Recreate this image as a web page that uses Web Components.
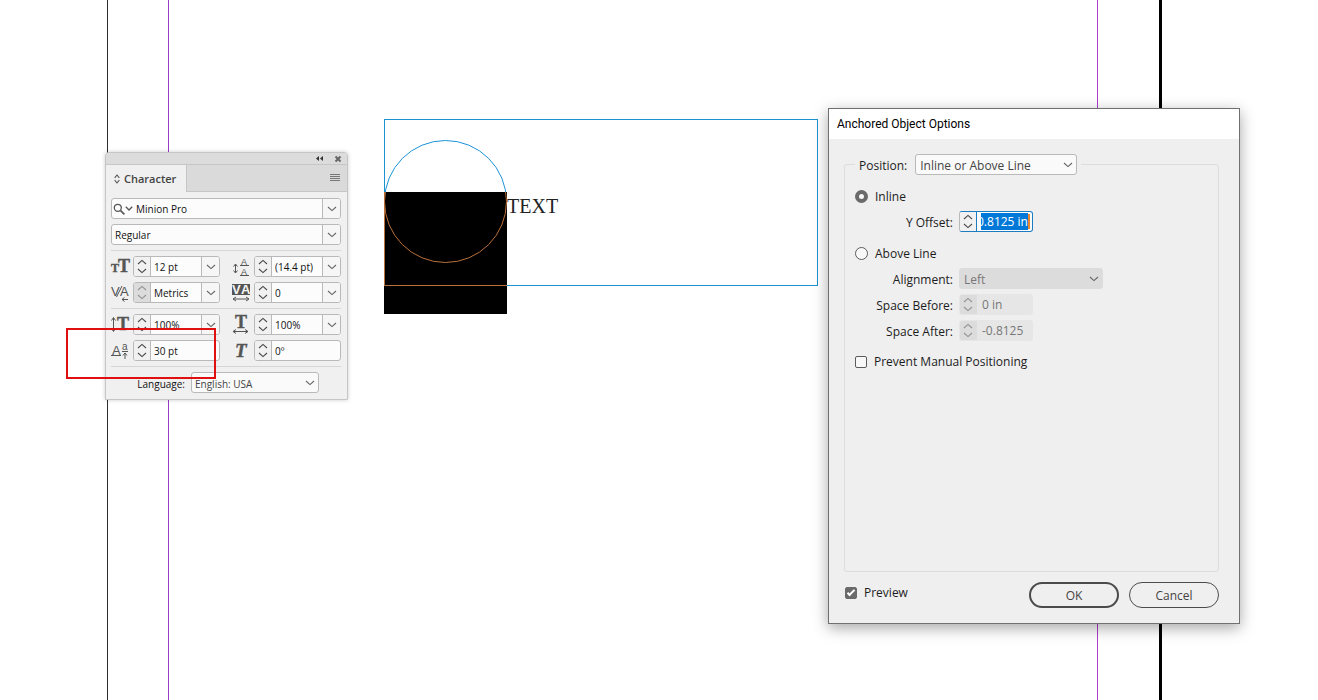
<!DOCTYPE html>
<html lang="en">
<head>
<meta charset="utf-8">
<title>Anchored Object Options</title>
<style>
  body {
    margin: 0;
    background: #fff;
    font-family: "Open Sans", "Noto Sans", sans-serif;
    font-size: 12px;
    color: #1c1c1c;
  }
</style>
</head>
<body>

<layout-canvas>
  <page-guide style="--x: 107px; --color: #2e2e2e"></page-guide>
  <page-guide style="--x: 168px; --color: #9a3cc8"></page-guide>
  <page-guide style="--x: 1097px; --color: #b03cd0"></page-guide>
  <page-guide style="--x: 1159px; --weight: 3px; --color: #000"></page-guide>
  <text-frame></text-frame>
  <character-panel></character-panel>
  <highlight-box></highlight-box>
  <anchor-dialog></anchor-dialog>
</layout-canvas>

<script>
const chevronDown = '<svg class="chevron" width="10" height="6" viewBox="0 0 10 6" aria-hidden="true"><path d="M1 1l4 3.6L9 1" fill="none" stroke="currentColor" stroke-width="1.1"/></svg>';
const chevronUp = '<svg class="chevron" width="10" height="6" viewBox="0 0 10 6" aria-hidden="true"><path d="M1 5l4-3.6L9 5" fill="none" stroke="currentColor" stroke-width="1.1"/></svg>';

/**
 * Base for all elements: attaches an open root and clones the template.
 */
class BaseElement extends HTMLElement {
  /** @param {string} html */
  render(html) {
    const template = document.createElement('template');
    template.innerHTML = `
      <style>
        *, ::before, ::after { box-sizing: border-box; }
        :host { display: block; box-sizing: border-box; }
        :host([hidden]) { display: none; }
        button, input, select { font: inherit; color: inherit; margin: 0; }
        svg { display: block; flex: none; }
      </style>
      ${html}
    `;
    this.attachShadow({mode: 'open'}).appendChild(template.content.cloneNode(true));
  }
}


/** The pasteboard. Guides, frames and windows are placed freely on it. */
class LayoutCanvas extends BaseElement {
  constructor() {
    super();
    this.render(`
      <style>
        :host { position: relative; min-height: 100vh; overflow: hidden; }
      </style>
      <slot></slot>
    `);
  }
}


class PageGuide extends BaseElement {
  constructor() {
    super();
    this.render(`
      <style>
        :host {
          position: absolute;
          top: 0;
          bottom: 0;
          left: var(--x);
          width: var(--weight, 1px);
          background: var(--color);
        }
      </style>
    `);
  }
}


/** Text frame with the anchored square and its circular path. */
class TextFrame extends BaseElement {
  constructor() {
    super();
    this.render(`
      <style>
        :host { position: absolute; left: 384px; top: 119px; }
        text { font: 20px "Liberation Serif", serif; fill: #222; }
      </style>
      <svg width="434" height="195" viewBox="0 0 434 195" fill="none">
        <defs>
          <clipPath id="above"><rect width="434" height="73"/></clipPath>
          <clipPath id="below"><rect y="73" width="123" height="122"/></clipPath>
        </defs>
        <rect y="73" width="123" height="122" fill="#000"/>
        <rect x=".5" y=".5" width="433" height="166" stroke="#1c93cf"/>
        <circle cx="61.5" cy="82.5" r="61" stroke="#1c93d8" clip-path="url(#above)"/>
        <g clip-path="url(#below)" stroke="#b9703a">
          <path d="M.5 73V166.5H123"/>
          <circle cx="61.5" cy="82.5" r="61"/>
        </g>
        <text x="123" y="94">TEXT</text>
      </svg>
    `);
  }
}


class HighlightBox extends BaseElement {
  constructor() {
    super();
    this.render(`
      <style>
        :host {
          position: absolute;
          left: 66px;
          top: 328px;
          width: 150px;
          height: 51px;
          border: 2px solid #e01010;
          pointer-events: none;
        }
      </style>
    `);
  }
}


/**
 * Text field with optional stepper and drop-down button.
 * Attributes: label, value, name, stepper, menu, disabled, selected,
 *    stepper-off, search.
 */
class ValueField extends BaseElement {
  constructor() {
    super();
    const has = (name) => this.hasAttribute(name);
    const text = this.getAttribute('label') || '';
    const off = has('disabled') ? 'disabled' : '';
    const stepOff = has('disabled') || has('stepper-off') ? 'disabled' : '';

    this.render(`
      <style>
        :host { display: flex; align-items: center; gap: 6px; min-width: 0; }
        label { width: var(--label-width); padding-top: 2px; text-align: right; white-space: nowrap; }
        .box {
          display: flex;
          flex: 1;
          min-width: 0;
          height: 21px;
          border: 1px solid #b9b9b9;
          border-radius: 3px;
          background: #fcfcfc;
          overflow: hidden;
        }
        input {
          flex: 1;
          width: 0;
          min-width: 0;
          padding: 0;
          margin: 0 var(--inset, 3px);
          border: 0;
          outline: 0;
          background: none;
        }
        button {
          display: grid;
          place-items: center;
          padding: 0;
          border: 0;
          background: none;
          color: #4a4a4a;
        }
        .stepper {
          display: grid;
          grid-template-rows: 1fr 1fr;
          flex: none;
          width: 17px;
          border-right: 1px solid #b9b9b9;
          background: #f1f1f1;
        }
        .stepper.off { background: #dcdcdc; }
        .stepper.off button { color: #929292; }
        .menu {
          flex: none;
          width: 18px;
          border-left: 1px solid #b9b9b9;
          background: #f6f6f6;
          color: #666;
        }
        .search { display: flex; align-items: center; padding-left: 1px; color: #555; }
        :host([label]) .box { flex: none; width: 74px; }
        :host([disabled]) .box { border-color: #e6e6e6; background: #e6e6e6; }
        :host([disabled]) .stepper { border-color: #dcdcdc; }
        :host([disabled]) input { color: #777; }
        :host([selected]) .box { border-color: #1b7cc2; border-left-color: #b9b9b9; }
        :host([selected]) .stepper { border-color: #1b7cc2; margin: -1px 0; border-block: 1px solid #b9b9b9; }
        :host([selected]) input { margin-right: 0; }
        ::selection { background: #0078d7; color: #fff; }
        .caret { flex: none; width: 2px; margin: 2px 2px 2px 0; background: #e8862e; }
      </style>
      ${text ? `<label for="field">${text}</label>` : ''}
      <div class="box">
        ${has('stepper') ? `<div class="stepper ${stepOff && 'off'}">
          <button type="button" aria-label="Increase" ${stepOff}>${chevronUp}</button>
          <button type="button" aria-label="Decrease" ${stepOff}>${chevronDown}</button>
        </div>` : ''}
        ${has('search') ? `<button type="button" class="search" aria-label="Search">
          <svg width="12" height="12" viewBox="0 0 12 12"><circle cx="4.8" cy="4.8" r="3.5" fill="none" stroke="currentColor" stroke-width="1.3"/><path d="M7.4 7.4l4 4" stroke="currentColor" stroke-width="1.6"/></svg>
          <svg width="8" height="5" viewBox="0 0 8 5"><path d="M.8.8L4 4 7.2.8" fill="none" stroke="currentColor" stroke-width="1.3"/></svg>
        </button>` : ''}
        <input id="field" type="text" value="${this.getAttribute('value')}" ${text ? '' : `aria-label="${this.getAttribute('name')}"`} ${off}>
        ${has('selected') ? '<span class="caret"></span>' : ''}
        ${has('menu') ? `<button type="button" class="menu" aria-label="Open list">${chevronDown}</button>` : ''}
      </div>
    `);
  }

  connectedCallback() {
    if (!this.hasAttribute('selected')) {
      return;
    }

    const input = this.shadowRoot.querySelector('input');
    input.focus({preventScroll: true});
    input.select();
    input.scrollLeft = input.scrollWidth;
  }
}


/** Labelled drop-down. Attributes: label, value, disabled. */
class SelectField extends BaseElement {
  constructor() {
    super();
    this.render(`
      <style>
        :host { display: flex; align-items: center; gap: 6px; }
        label { width: var(--label-width); padding-top: 2px; text-align: right; white-space: nowrap; }
        .box {
          display: grid;
          align-items: center;
          width: var(--select-width);
          height: 21px;
          color: #444;
        }
        select, .chevron { grid-area: 1 / 1; }
        select {
          appearance: none;
          width: 100%;
          height: 21px;
          padding: 2px 20px 0 var(--inset, 3px);
          border: 1px solid #b9b9b9;
          border-radius: 3px;
          background: #fafafa;
          opacity: 1;
        }
        .chevron { justify-self: end; margin-right: 4px; pointer-events: none; color: #666; }
        :host([disabled]) select { border-color: #dcdcdc; background: #dcdcdc; color: #777; }
      </style>
      <label for="select">${this.getAttribute('label')}</label>
      <div class="box">
        <select id="select" ${this.hasAttribute('disabled') ? 'disabled' : ''}>
          <option>${this.getAttribute('value')}</option>
        </select>
        ${chevronDown}
      </div>
    `);
  }
}


/** Glyphs in front of the character fields, one per `name`. */
class TypeIcon extends BaseElement {
  static get shapes() {
    return {
      size: '<text x="0" y="15" font-size="12">T</text><text x="7" y="15" font-size="18">T</text>',
      leading: '<g class="sans"><text x="9" y="8" font-size="9">A</text><text x="9" y="18" font-size="9">A</text></g><path d="M8 8.500h9M8 18.500h9M3.500 7v9M1.500 9.500l2-2.500 2 2.500M1.500 13.500l2 2.500 2-2.500"/>',
      kerning: '<g class="sans"><text x="0" y="13" font-size="13">V</text><text x="9" y="13" font-size="13">A</text></g><path d="M5.500 14L11 3M11 16.500h6M13.500 14.500l-2.500 2 2.500 2"/>',
      tracking: '<rect x="0" y="1" width="18" height="11" fill="currentColor" stroke="none"/><g class="knock"><text x="0" y="11" font-size="13">V</text><text x="9" y="11" font-size="13">A</text></g><path d="M1 16h16M4 14l-3 2 3 2M14 14l3 2-3 2"/>',
      vscale: '<text x="6" y="15" font-size="18">T</text><path d="M2.500 3v13M.5 5.500l2-3 2 3M.5 13.500l2 3 2-3"/>',
      hscale: '<text x="3" y="13" font-size="18">T</text><path d="M1 16.500h15M4 14.500l-3 2 3 2M13 14.500l3 2-3 2"/>',
      baseline: '<g class="sans"><text x="1" y="14" font-size="13">A</text><text x="11" y="9" font-size="10">a</text></g><path d="M0 14.500h10M11 10.500h6M14 12v6M12 14.500l2-2.500 2 2.500"/>',
      skew: '<text x="3" y="16" font-size="19" font-style="italic">T</text>',
    };
  }

  constructor() {
    super();
    this.render(`
      <style>
        :host { width: 19px; height: 19px; color: #555; }
        svg { fill: none; stroke: currentColor; overflow: visible; }
        text { fill: currentColor; stroke: currentColor; stroke-width: .4; font-family: "Liberation Serif", serif; font-weight: 700; }
        .sans text { stroke: none; font-family: "Liberation Sans", sans-serif; font-weight: 400; }
        .knock text { fill: #f4f4f4; stroke: none; font-family: "Liberation Sans", sans-serif; }
      </style>
      <svg width="19" height="19" viewBox="0 0 19 19" aria-hidden="true">${TypeIcon.shapes[this.getAttribute('name')]}</svg>
    `);
  }
}


class CharacterPanel extends BaseElement {
  constructor() {
    super();
    this.render(`
      <style>
        :host {
          position: absolute;
          left: 105px;
          top: 152px;
          width: 243px;
          border: 1px solid #c6c6c6;
          border-radius: 4px 4px 0 0;
          background: #f0f0f0;
          box-shadow: 0 0 4px rgba(0, 0, 0, .2);
          overflow: hidden;
          font-size: 10px;
          color: #111;
        }
        button { display: flex; padding: 0; border: 0; background: none; color: #444; }
        .bar {
          display: flex;
          justify-content: flex-end;
          align-items: center;
          gap: 10px;
          height: 12px;
          padding-right: 5px;
          border-bottom: 1px solid #c6c6c6;
          background: #dcdcdc;
        }
        .tabs { display: flex; height: 27px; background: #dadada; }
        .tab {
          align-items: center;
          gap: 4px;
          width: 81px;
          padding-left: 8px;
          border-right: 1px solid #c6c6c6;
          background: #f0f0f0;
          font-size: 11px;
          font-weight: 600;
        }
        .rest {
          display: flex;
          flex: 1;
          align-items: center;
          justify-content: flex-end;
          padding-right: 7px;
          border-bottom: 1px solid #c6c6c6;
        }
        .body { display: flex; flex-direction: column; gap: 5px; padding: 6px 6px 6px 5px; }
        .row {
          display: grid;
          grid-template-columns: 22px 1fr 22px 1fr;
          align-items: center;
        }
        .row > :nth-child(2) { margin-right: 6px; }
        .row > :nth-child(3) { margin-left: 6px; }
        .row > :nth-child(4) { margin-left: 6px; }
        hr { width: 100%; height: 1px; margin: 0; border: 0; background: #d6d6d6; }
        select-field { --label-width: 74px; --select-width: 128px; }
      </style>
      <div class="bar">
        <button type="button" aria-label="Collapse"><svg width="9" height="7" viewBox="0 0 9 7"><path d="M4 1v5L1 3.500zM8 1v5L5 3.500z" fill="#333"/></svg></button>
        <button type="button" aria-label="Close"><svg width="8" height="8" viewBox="0 0 8 8"><path d="M1.500 1.500l5 5M6.500 1.500l-5 5" stroke="#666" stroke-width="2"/></svg></button>
      </div>
      <div class="tabs">
        <button type="button" class="tab">
          <svg width="6" height="10" viewBox="0 0 6 10"><path d="M.7 3.800L3 1l2.300 2.800M.7 6.200L3 9l2.300-2.800" fill="none" stroke="#555" stroke-width="1.1"/></svg>
          Character
        </button>
        <div class="rest">
          <button type="button" aria-label="Panel menu"><svg width="10" height="8" viewBox="0 0 10 8"><path d="M0 .5h10M0 2.500h10M0 4.500h10M0 6.500h10" stroke="#777"/></svg></button>
        </div>
      </div>
      <div class="body">
        <value-field name="Font family" value="Minion Pro" search menu></value-field>
        <value-field name="Font style" value="Regular" menu></value-field>
        <hr>
        <div class="row">
          <type-icon name="size"></type-icon>
          <value-field name="Font size" value="12 pt" stepper menu></value-field>
          <type-icon name="leading"></type-icon>
          <value-field name="Leading" value="(14.4 pt)" stepper menu></value-field>
        </div>
        <div class="row">
          <type-icon name="kerning"></type-icon>
          <value-field name="Kerning" value="Metrics" stepper stepper-off menu></value-field>
          <type-icon name="tracking"></type-icon>
          <value-field name="Tracking" value="0" stepper menu></value-field>
        </div>
        <hr>
        <div class="row">
          <type-icon name="vscale"></type-icon>
          <value-field name="Vertical scale" value="100%" stepper menu></value-field>
          <type-icon name="hscale"></type-icon>
          <value-field name="Horizontal scale" value="100%" stepper menu></value-field>
        </div>
        <div class="row">
          <type-icon name="baseline"></type-icon>
          <value-field name="Baseline shift" value="30 pt" stepper></value-field>
          <type-icon name="skew"></type-icon>
          <value-field name="Skew" value="0º" stepper></value-field>
        </div>
        <hr>
        <select-field label="Language:" value="English: USA"></select-field>
      </div>
    `);
  }
}


class AnchorDialog extends BaseElement {
  constructor() {
    super();
    this.render(`
      <style>
        :host {
          --inset: 4px;
          position: absolute;
          left: 828px;
          top: 108px;
          width: 412px;
          border: 1px solid #707070;
          background: #efefef;
          box-shadow: 0 4px 14px rgba(0, 0, 0, .35);
        }
        h1 {
          margin: 0;
          padding-left: 8px;
          background: #fff;
          font: 400 12px/30px Roboto, sans-serif;
          color: #000;
        }
        form { padding: 15px 20px 15px 15px; }
        fieldset {
          display: flex;
          flex-direction: column;
          gap: 10px;
          min-height: 418px;
          margin: 0;
          padding: 10px;
          border: 1px solid #dcdcdc;
          border-radius: 3px;
        }
        legend { padding: 0 4px; }
        legend select-field { --select-width: 162px; gap: 8px; }
        .group { display: flex; flex-direction: column; gap: 5px; }
        .group { --label-width: 98px; --select-width: 144px; }
        .group value-field[disabled] { --inset: 5px; }
        .choice { display: flex; align-items: center; gap: 7px; height: 21px; }
        .group .choice { padding-top: 2px; }
        [type=radio], [type=checkbox] {
          appearance: none;
          flex: none;
          width: 13px;
          height: 13px;
          border: 1px solid #5c5c5c;
          background: #f8f8f8;
        }
        [type=radio] { border-radius: 50%; }
        [type=radio]:checked { border: 4px solid #6a6a6a; }
        [type=checkbox] { display: grid; place-items: center; width: 12px; height: 12px; border-radius: 2px; }
        [type=checkbox]:checked { border-color: #6a6a6a; background: #6a6a6a; }
        [type=checkbox]:checked::before {
          content: "";
          width: 8px;
          height: 4px;
          border: solid #fff;
          border-width: 0 0 2px 2px;
          transform: translateY(-1px) rotate(-45deg);
        }
        footer { display: flex; align-items: center; gap: 10px; padding: 10px 0 0 1px; }
        footer .choice { flex: 1; align-self: flex-start; }
        footer button {
          width: 90px;
          height: 26px;
          padding: 0;
          border: 1px solid #4b4b4b;
          border-radius: 13px;
          background: none;
          color: #444;
        }
        footer .primary { border-width: 2px; }
      </style>
      <h1>Anchored Object Options</h1>
      <form>
        <fieldset>
          <legend><select-field label="Position:" value="Inline or Above Line"></select-field></legend>
          <div class="group">
            <label class="choice"><input type="radio" name="position" checked>Inline</label>
            <value-field label="Y Offset:" value="0.8125 in" stepper selected></value-field>
          </div>
          <div class="group">
            <label class="choice"><input type="radio" name="position">Above Line</label>
            <select-field label="Alignment:" value="Left" disabled></select-field>
            <value-field label="Space Before:" value="0 in" stepper disabled></value-field>
            <value-field label="Space After:" value="-0.8125 in" stepper disabled></value-field>
          </div>
          <label class="choice"><input type="checkbox">Prevent Manual Positioning</label>
        </fieldset>
        <footer>
          <label class="choice"><input type="checkbox" checked>Preview</label>
          <button type="button" class="primary">OK</button>
          <button type="button">Cancel</button>
        </footer>
      </form>
    `);
  }
}

window.customElements.define('layout-canvas', LayoutCanvas);
window.customElements.define('page-guide', PageGuide);
window.customElements.define('text-frame', TextFrame);
window.customElements.define('highlight-box', HighlightBox);
window.customElements.define('value-field', ValueField);
window.customElements.define('select-field', SelectField);
window.customElements.define('type-icon', TypeIcon);
window.customElements.define('character-panel', CharacterPanel);
window.customElements.define('anchor-dialog', AnchorDialog);
</script>
</body>
</html>
